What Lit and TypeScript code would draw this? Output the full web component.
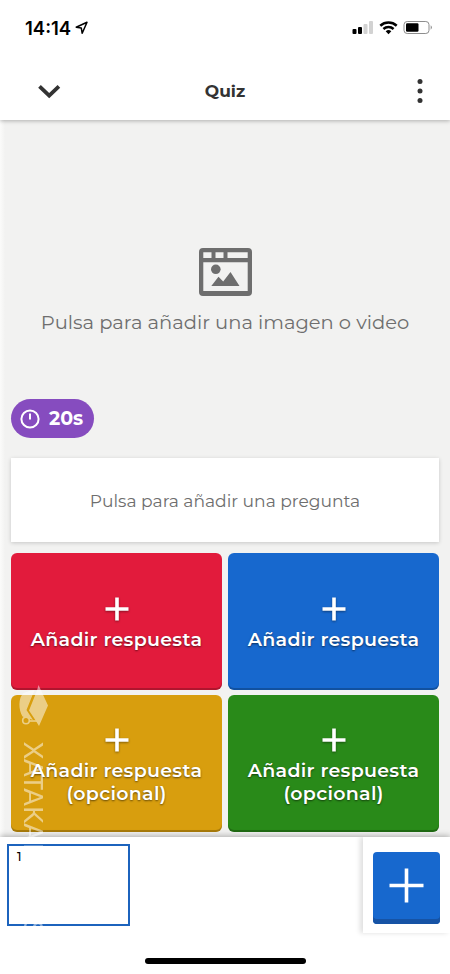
import { LitElement, html, css, svg } from "lit";
import { customElement, property } from "lit/decorators.js";

@customElement("answer-tile")
class AnswerTile extends LitElement {
  @property() label = "";
  @property() note = "";
  static styles = css`
    :host { display: flex; flex-direction: column; align-items: center; justify-content: center;
      box-sizing: border-box; border-radius: 6px; color: #fff;
      box-shadow: inset 0 -2px 0 rgba(0, 0, 0, 0.22);
      font: 600 19px/23px Montserrat, Inter, sans-serif; letter-spacing: 0.3px; padding-top: 5px; }
    .plus { display: block; filter: drop-shadow(0 1px 1px rgba(0, 0, 0, 0.4)); margin-bottom: 7px; }
    .text { white-space: nowrap; text-shadow: 0 1px 2px rgba(0, 0, 0, 0.55); }
  `;
  render() {
    return html`
      <svg class="plus" width="24" height="24" viewBox="0 0 24 24"><path d="M12 .5v23M.5 12h23" stroke="#fff" stroke-width="3.6"/></svg>
      <div class="text">${this.label}</div>
      ${this.note ? html`<div class="text">${this.note}</div>` : ""}
    `;
  }
}

@customElement("app-root")
class AppRoot extends LitElement {
  static styles = css`
    :host { display: flex; flex-direction: column; position: relative; width: 450px; height: 974px;
      overflow: hidden; background: #fff; font-family: Montserrat, Inter, sans-serif; color: #333; }
    svg { display: block; }
    .status { height: 62px; flex: none; display: flex; align-items: flex-start; box-sizing: border-box; padding: 17px 17px 0 25px; color: #000; }
    .time { font: 600 18.5px/22px Inter, sans-serif; width: 50px; }
    .indicators { margin-left: auto; margin-top: 3px; }
    .arrow { margin-top: 4px; }
    .bar { height: 58px; flex: none; display: grid; grid-template-columns: 98px 1fr 98px; align-items: center; z-index: 1;
      box-shadow: 0 1px 4px rgba(0, 0, 0, 0.28); clip-path: inset(0 0 -8px 0); }
    .bar svg { justify-self: center; }
    .title { text-align: center; font-weight: 700; font-size: 17px; }
    .more { margin-left: 38px; }
    .stage { flex: none; height: 717px; box-sizing: border-box; padding: 0 11px; display: flex; flex-direction: column;
      background: linear-gradient(90deg, #fbfbfa 0, #f2f2f1 5px, #f2f2f1 100%); }
    .media { height: 279px; display: flex; flex-direction: column; align-items: center; box-sizing: border-box; padding-top: 128px; color: #6e6e6e; }
    .hint { margin-top: 14px; font-size: 19.5px; line-height: 24px; white-space: nowrap; }
    .timer { width: 83px; height: 39px; border-radius: 20px; background: #864cbf; color: #fff; display: flex; align-items: center;
      box-sizing: border-box; padding-left: 9px; gap: 9px; font-size: 19px; font-weight: 700; }
    .question { margin-top: 20px; height: 84px; background: #fff; box-shadow: 0 1px 4px rgba(0, 0, 0, 0.18); display: flex;
      align-items: center; justify-content: center; color: #6e6e6e; font-size: 17.1px; white-space: nowrap; }
    .answers { margin-top: 11px; display: grid; grid-template-columns: 211px 211px; grid-auto-rows: 137px; gap: 5px 6px; }
    .red { background: #e21b3c; }
    .blue { background: #1768ce; }
    .gold { background: #d89e0e; }
    .green { background: #298a19; }
    .dock { position: relative; flex: 1; display: flex; justify-content: space-between; align-items: flex-start; background: #fff;
      box-shadow: 0 -1px 6px rgba(0, 0, 0, 0.3); }
    .slide { box-sizing: border-box; width: 123px; height: 82px; margin: 7px 0 0 7px; border: 2px solid #1c63bd; padding: 4px 0 0 8px;
      font: 500 12px/14px Montserrat, Inter, sans-serif; color: #000; }
    .adder { width: 87px; height: 96px; box-sizing: border-box; padding: 15px 0 0 10px; background: #fff;
      box-shadow: -3px 0 5px rgba(0, 0, 0, 0.13); clip-path: inset(0 0 -6px -10px); }
    .add { width: 67px; height: 72px; border-radius: 4px; background: #1768ce; box-shadow: inset 0 -5px 0 #1653a5; display: flex; justify-content: center; padding-top: 16px; box-sizing: border-box; }
    .home { position: absolute; left: 145px; bottom: 10px; width: 161px; height: 6px; border-radius: 3px; background: #000; }
    .mark { position: absolute; left: 0; top: 680px; pointer-events: none; }
    .mark text { font-family: Lato, sans-serif; font-size: 27.5px; fill: #fff; }
  `;

  render() {
    return html`
      <div class="status">
        <div class="time">14:14</div>
        <svg class="arrow" width="14" height="14" viewBox="0 0 14 14"><path d="M1.2 6.2 12 1.2 7.2 12.3 6.3 7.1Z" fill="none" stroke="#000" stroke-width="1.5" stroke-linejoin="round"/></svg>
        <svg class="indicators" width="81" height="16" viewBox="0 0 81 16">
          <rect x="0.5" y="9" width="4" height="5" rx="1"/><rect x="6" y="7" width="4" height="7" rx="1"/>
          <g fill="#d2d2d2"><rect x="11.5" y="4" width="4" height="10" rx="1"/><rect x="17" y="1" width="4" height="13" rx="1"/></g>
          <path d="M28.3 5.7a12.2 12.2 0 0 1 16.4 0M31.4 9a7.7 7.7 0 0 1 10.2 0" fill="none" stroke="#000" stroke-width="2.5"/>
          <path d="m36.5 14.2-2.8-2.9a4.2 4.2 0 0 1 5.6 0Z"/>
          <rect x="52" y="1.5" width="25" height="12" rx="3.2" fill="none" stroke="#8d8d8d"/><rect x="54" y="3.2" width="12.5" height="8.6" rx="1.2"/>
          <path d="M78.7 5.3q2.4 2.2 0 4.4Z" fill="#8d8d8d"/>
        </svg>
      </div>
      <div class="bar">
        <svg width="24" height="16" viewBox="0 0 24 16"><path d="m2.5 3.3 9.700 9.400L21.900 3.300" fill="none" stroke="#333" stroke-width="3.8"/></svg>
        <div class="title">Quiz</div>
        <svg class="more" width="6" height="26" viewBox="0 0 6 26" fill="#333"><circle cx="3" cy="3.4" r="2.5"/><circle cx="3" cy="13" r="2.5"/><circle cx="3" cy="22.6" r="2.5"/></svg>
      </div>
      <div class="stage">
        <div class="media">
          <svg width="53" height="48" viewBox="0 0 53 48" fill="#6e6e6e">
            <path fill-rule="evenodd" d="M4 0h45q4 0 4 4v40q0 4-4 4H4q-4 0-4-4V4q0-4 4-4ZM4.300 4.300V10h8.200V4.300ZM16.500 4.300V10h8V4.300ZM28.500 4.300V10h20.200V4.300ZM4.300 14.300V43h44.400V14.300Z"/>
            <circle cx="16.8" cy="21.3" r="4.8"/>
            <path d="m12.300 38 7.200-9.200 4.700 4.600 7.300-9.400 9 14Z"/>
          </svg>
          <div class="hint">Pulsa para añadir una imagen o video</div>
        </div>
        <div class="timer">
          <svg width="20" height="20" viewBox="0 0 20 20"><circle cx="10" cy="10" r="8.6" fill="none" stroke="#fff" stroke-width="2"/><path d="M10 4.500v6" stroke="#fff" stroke-width="2"/></svg>
          <span>20s</span>
        </div>
        <div class="question">Pulsa para añadir una pregunta</div>
        <div class="answers">
          <answer-tile class="red" label="Añadir respuesta"></answer-tile>
          <answer-tile class="blue" label="Añadir respuesta"></answer-tile>
          <answer-tile class="gold" label="Añadir respuesta" note="(opcional)"></answer-tile>
          <answer-tile class="green" label="Añadir respuesta" note="(opcional)"></answer-tile>
        </div>
      </div>
      <div class="dock">
        <div class="slide">1</div>
        <div class="adder"><div class="add"><svg width="35" height="35" viewBox="0 0 35 35"><path d="M17.500.500v34M.500 17.500h34" stroke="#fff" stroke-width="3.6"/></svg></div></div>
        <div class="home"></div>
      </div>
      <svg class="mark" width="60" height="260" viewBox="0 0 60 260" opacity="0.5">
        ${svg`
          <path fill="#fff" d="M38.500 5 48 25.500 39 46l-4-6.500-6-9L37 10.500Z M34.500 10 26.500 30l6.500 10-10.500-3.500C18.500 30 18 18 23.500 13q5-2 11-3Z"/>
          <circle cx="26" cy="40.5" r="3.3" fill="none" stroke="#fff" stroke-width="1.6"/>
          <path d="M29 41h8" stroke="#fff" stroke-width="1.6"/>
          <text transform="translate(24 62) rotate(90)" textLength="99" lengthAdjust="spacingAndGlyphs">XATAKA</text>
          <text transform="translate(24 163) rotate(90)" textLength="92" lengthAdjust="spacingAndGlyphs">BASICS</text>
        `}
      </svg>
    `;
  }
}
